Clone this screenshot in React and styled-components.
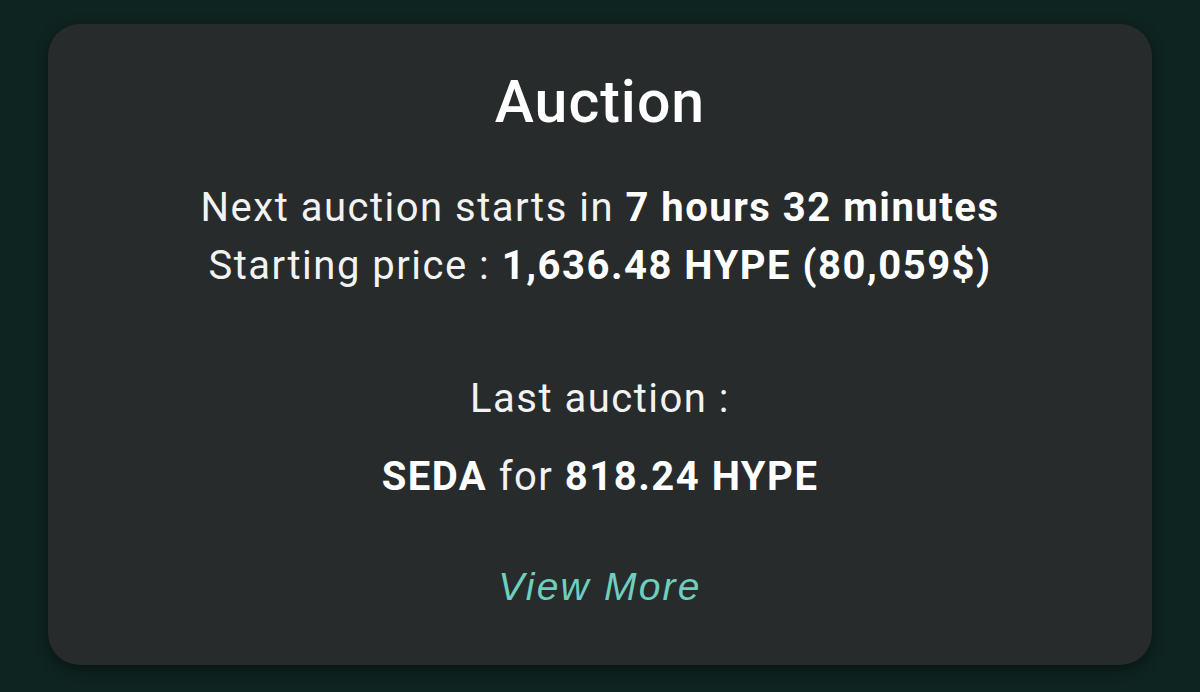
import React from 'react';
import styled, { createGlobalStyle } from 'styled-components';

const GlobalStyle = createGlobalStyle`
  html, body {
    margin: 0;
    padding: 0;
    background: #0e2420;
  }
  body {
    font-family: Roboto, "Noto Sans", sans-serif;
  }
`;

const Page = styled.div`
  width: 1200px;
  height: 692px;
  box-sizing: border-box;
  padding: 24px 48px 27px;
  background: #0e2420;
`;

const Card = styled.section`
  height: 100%;
  box-sizing: border-box;
  background: #272b2b;
  border-radius: 32px;
  box-shadow: 0 4px 14px rgba(0, 0, 0, 0.45);
  display: flex;
  flex-direction: column;
  align-items: center;
  padding-top: 48px;
  color: #ffffff;
  text-align: center;
`;

const Title = styled.h1`
  margin: 0;
  font-size: 59px;
  font-weight: 500;
  line-height: 59px;
  letter-spacing: 1px;
`;

const Info = styled.div`
  margin-top: ${p => p.$gap}px;
  font-size: 40px;
  font-weight: 400;
  line-height: 58px;
  letter-spacing: 1.5px;
  color: #f2f2f2;

  b {
    font-weight: 700;
    color: #ffffff;
  }
`;

const Line = styled.div``;

const MoreLink = styled.a`
  margin-top: 61px;
  font-family: "Liberation Sans", Arial, sans-serif;
  font-style: italic;
  font-size: 39px;
  line-height: 39px;
  letter-spacing: 2.2px;
  color: #6fcfbf;
  text-decoration: none;
  cursor: pointer;
`;

export default function App() {
  return (
    <>
      <GlobalStyle />
      <Page>
        <Card>
          <Title>Auction</Title>
          <Info $gap={48}>
            <Line>Next auction starts in <b>7 hours 32 minutes</b></Line>
            <Line>Starting price : <b>1,636.48 HYPE (80,059$)</b></Line>
          </Info>
          <Info $gap={75}>
            <Line>Last auction :</Line>
          </Info>
          <Info $gap={20}>
            <Line><b>SEDA</b> for <b>818.24 HYPE</b></Line>
          </Info>
          <MoreLink>View More</MoreLink>
        </Card>
      </Page>
    </>
  );
}
